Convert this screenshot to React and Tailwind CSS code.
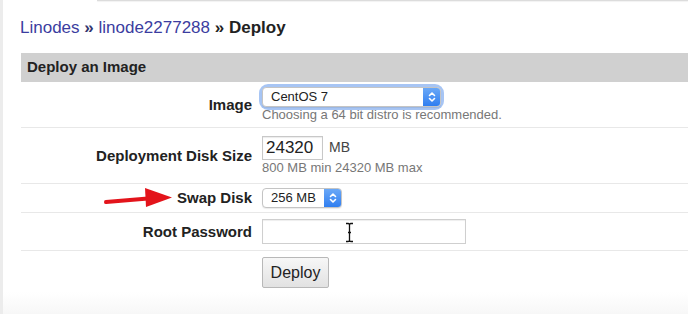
import React from 'react';

const Chevrons = () => (
    <svg width="8" height="12" viewBox="0 0 8 12" fill="none" stroke="white" strokeWidth="1.6" strokeLinecap="round" strokeLinejoin="round">
        <path d="M1.5 4.5 L4 2 L6.5 4.5" />
        <path d="M1.5 7.5 L4 10 L6.5 7.5" />
    </svg>
);

const MacSelect = ({ value, width, focused }) => (
    <div className={`relative self-start w-fit ${focused ? 'rounded-[6px] shadow-[0_0_0_3px_rgba(95,150,235,0.55)]' : ''}`}>
        <div
            className="flex h-[20px] items-stretch rounded-[4px] border border-[#c4c4c4] bg-white shadow-[0_1px_1px_rgba(0,0,0,0.08)] overflow-hidden"
            style={{ width }}
        >
            <span className="flex-1 pl-[8px] text-[13px] leading-[18px] text-[#222]">{value}</span>
            <span className="flex w-[17px] items-center justify-center bg-gradient-to-b from-[#6aa8f7] to-[#2f7ef0]">
                <Chevrons />
            </span>
        </div>
    </div>
);

const Row = ({ label, className = '', children }) => (
    <div className={`flex items-center border-b border-[#e8e8e8] ${className}`}>
        <div className="w-[231px] text-right text-[15px] font-bold leading-[20px] text-[#222]">{label}</div>
        <div className="ml-[10px] flex flex-col">{children}</div>
    </div>
);

export default function App() {
    return (
        <div className="relative w-[688px] h-[314px] overflow-hidden bg-white border-l-[3px] border-[#ececec] font-['Liberation_Sans',Arial,sans-serif]">
            {/* top edge of the nav above */}
            <div className="ml-[94px] h-px bg-[#dcdcdc] shadow-[0_1px_1px_rgba(0,0,0,0.06)]" />

            {/* Breadcrumb */}
            <div className="mt-[17px] pl-[17px] text-[17px] leading-[20px]">
                <span className="text-[#3b3da0]">Linodes</span>
                <span className="font-bold text-[#33356e]"> » </span>
                <span className="text-[#3b3da0]">linode2277288</span>
                <span className="font-bold text-[#222]"> » Deploy</span>
            </div>

            <div className="mt-[15px] ml-[18px]">
                {/* Section header */}
                <div className="flex h-[29px] items-center bg-[#d0d0d0] pl-[6px] text-[15px] font-bold text-[#222]">
                    Deploy an Image
                </div>

                <Row label="Image" className="h-[46px]">
                    <MacSelect value="CentOS 7" width={179} focused />
                    <span className="text-[13px] leading-[16px] text-[#777]">Choosing a 64 bit distro is recommended.</span>
                </Row>

                <Row label="Deployment Disk Size" className="h-[56px]">
                    <div className="flex items-center gap-[6px]">
                        <div className="flex h-[24px] w-[61px] items-center border border-[#c8c8c8] pl-[3px] text-[17px] text-[#222] shadow-[inset_0_1px_1px_rgba(0,0,0,0.08)]">
                            24320
                        </div>
                        <span className="text-[14px] text-[#444]">MB</span>
                    </div>
                    <span className="text-[13px] leading-[16px] text-[#777]">800 MB min 24320 MB max</span>
                </Row>

                <Row label="Swap Disk" className="h-[29px]">
                    <MacSelect value="256 MB" width={80} />
                </Row>

                <Row label="Root Password" className="h-[38px]">
                    <div className="relative h-[25px] w-[204px] border border-[#cfcfcf] bg-white shadow-[inset_0_1px_1px_rgba(0,0,0,0.07)]">
                        {/* I-beam mouse cursor */}
                        <svg className="absolute left-[82px] top-[2px]" width="9" height="21" viewBox="0 0 9 21">
                            <path d="M1 1.5 H3.2 Q4.5 1.5 4.5 3 Q4.5 1.5 5.8 1.5 H8 M4.5 3 V18 Q4.5 19.5 3.2 19.5 H1 M4.5 18 Q4.5 19.5 5.8 19.5 H8" fill="none" stroke="white" strokeWidth="3" />
                            <path d="M1 1.5 H3.2 Q4.5 1.5 4.5 3 Q4.5 1.5 5.8 1.5 H8 M4.5 3 V18 Q4.5 19.5 3.2 19.5 H1 M4.5 18 Q4.5 19.5 5.8 19.5 H8 M3 10.5 H6" fill="none" stroke="#111" strokeWidth="1.3" />
                        </svg>
                    </div>
                </Row>

                <div className="flex pt-[6px]">
                    <div className="ml-[241px] flex h-[31px] w-[67px] items-center justify-center rounded-[2px] border border-[#b8b8b8] bg-gradient-to-b from-[#f7f7f7] to-[#e2e2e2] text-[16px] text-[#222]">
                        Deploy
                    </div>
                </div>
            </div>

            {/* faint bottom shade */}
            <div className="absolute inset-x-0 bottom-0 h-[22px] bg-gradient-to-b from-white to-[#f7f7f7]" />

            {/* red annotation arrow */}
            <svg className="absolute left-[100px] top-[187px]" width="72" height="22" viewBox="0 0 72 22">
                <path d="M3 15 L45 11.5" stroke="#e3141b" strokeWidth="4" strokeLinecap="round" />
                <path d="M42 1 L69 10.5 L43 20 Z" fill="#e3141b" />
            </svg>
        </div>
    );
}
